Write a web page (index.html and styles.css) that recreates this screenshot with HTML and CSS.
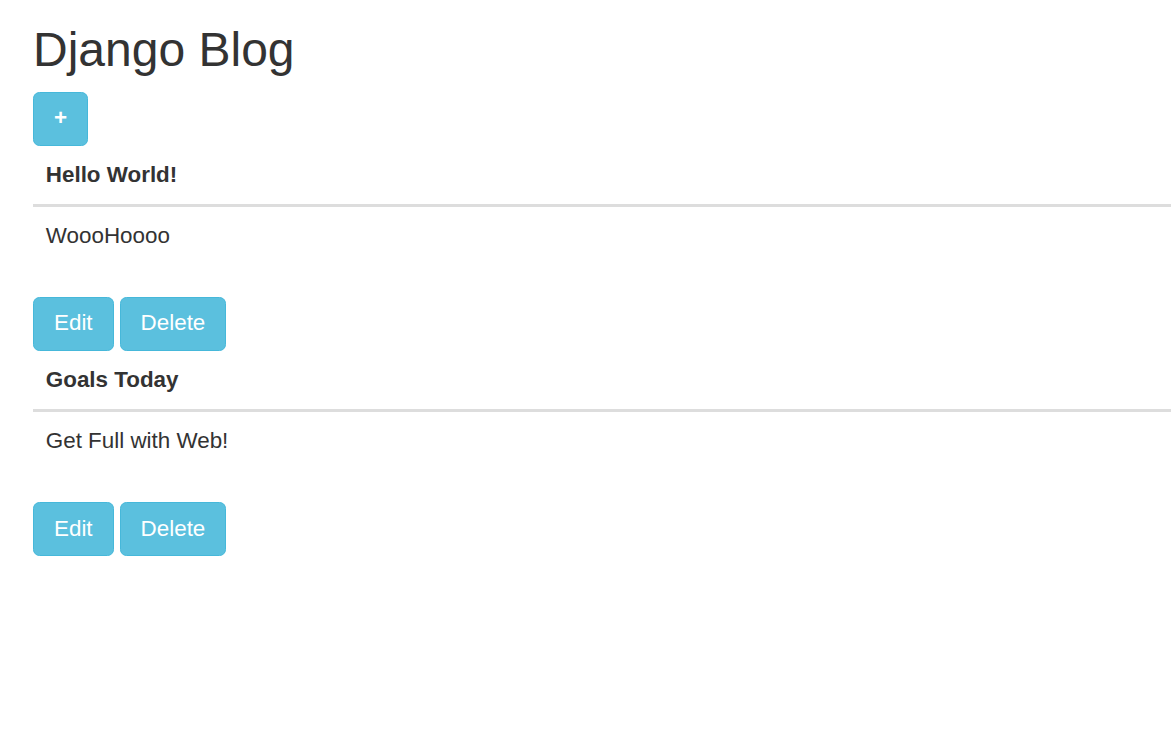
FILE: index.html
```html
<!DOCTYPE html>
<html lang="en">
<head>
<meta charset="utf-8">
<title>Django Blog</title>
<link rel="stylesheet" href="styles.css">
</head>
<body>
<div class="page">
  <h1 class="title">Django Blog</h1>
  <a class="btn btn-info btn-add" href="#">+</a>

  <table class="table">
    <thead><tr><th>Hello World!</th></tr></thead>
    <tbody><tr><td>WoooHoooo</td></tr></tbody>
  </table>
  <div class="actions">
    <a class="btn btn-info" href="#">Edit</a>
    <a class="btn btn-info" href="#">Delete</a>
  </div>

  <table class="table">
    <thead><tr><th>Goals Today</th></tr></thead>
    <tbody><tr><td>Get Full with Web!</td></tr></tbody>
  </table>
  <div class="actions">
    <a class="btn btn-info" href="#">Edit</a>
    <a class="btn btn-info" href="#">Delete</a>
  </div>
</div>
</body>
</html>
```

FILE: styles.css
```css
html, body {
  margin: 0;
  padding: 0;
  background: #fff;
}
body {
  font-family: "Liberation Sans", Arial, Helvetica, sans-serif;
  font-size: 22.4px;
  line-height: 32px;
  color: #333;
}
.page {
  padding-left: 33px;
}
.title {
  font-size: 48px;
  font-weight: 500;
  line-height: 52.8px;
  margin: 24px 0 15px;
}
.btn {
  display: inline-block;
  box-sizing: border-box;
  height: 54.4px;
  padding: 9.6px 20px;
  font-size: 22.4px;
  line-height: 32px;
  border: 1.6px solid #46b8da;
  border-radius: 6.4px;
  background: #5bc0de;
  color: #fff;
  text-decoration: none;
  vertical-align: top;
}
.btn-add {
  font-weight: bold;
}
.actions {
  display: flex;
  gap: 6px;
}
.table {
  width: 100%;
  border-collapse: collapse;
  border-spacing: 0;
  margin-bottom: 32.5px;
}
.table th,
.table td {
  text-align: left;
  padding: 12.8px;
  line-height: 32px;
  vertical-align: top;
}
.table th {
  font-weight: bold;
  border-bottom: 3.2px solid #ddd;
  vertical-align: bottom;
}
```
